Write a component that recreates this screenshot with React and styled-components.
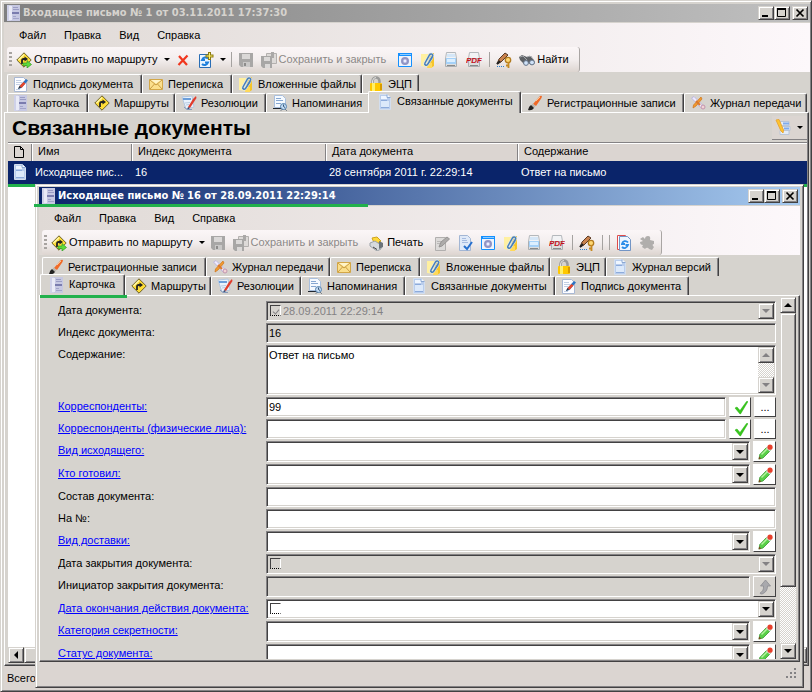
import React from 'react';
import styled, { createGlobalStyle, css } from 'styled-components';

const face = '#d6d3ce';
const green = '#22b14c';

const raised = css`
  border: 1px solid;
  border-color: #d6d3ce #424142 #424142 #d6d3ce;
  box-shadow: inset 1px 1px #fff, inset -1px -1px #848284;
`;

const sunken = css`
  border: 1px solid;
  border-color: #848284 #fff #fff #848284;
  box-shadow: inset 1px 1px #424142, inset -1px -1px #d6d3ce;
`;

const GlobalStyle = createGlobalStyle`
  * { box-sizing: border-box; }
  body { margin: 0; background: ${face}; }
  body, button, input, select, textarea {
    font: 11px/13px "Liberation Sans", Arial, sans-serif;
    color: #000;
  }
`;

/* ---------- icons ---------- */

const Svg = styled.svg`
  flex: none;
  width: 16px;
  height: 16px;
  display: block;
`;

const ClipShape = () => (
  <>
    <path d="M1 2h9v12l-2 1-7-1z" fill="#fff0a0" />
    <path d="M9 1h5v13l-3 2H8z" fill="#f6c52a" />
    <path d="M8 11h4v5H7z" fill="#ffd95a" />
    <path d="M12.500 5 7.500 12.500c-1.200 1.500-3.500.3-2.500-1.500L9.500 3c1.300-2 4-.8 3 1.200L9 10" fill="none" stroke="#dbe8f3" strokeWidth="2.600" />
    <path d="M12.500 5 7.500 12.500c-1.200 1.500-3.500.3-2.500-1.500L9.500 3c1.300-2 4-.8 3 1.200L9 10" fill="none" stroke="#4a7fb5" strokeWidth="1.500" />
  </>
);

const RouteShape = () => (
  <>
    <path d="M8 .8 15.200 8 8 15.200.8 8z" fill="#ffdd35" stroke="#6b5f28" strokeLinejoin="round" />
    <path d="M2.500 8 8 2.500" stroke="#fff6a8" strokeWidth="1.500" />
    <path d="M6 12V8.500Q6 7 7.500 7H9" fill="none" stroke="#222" strokeWidth="1.800" />
    <path d="m8.500 4.500 3.500 2.500-3.500 2.500z" fill="#222" />
  </>
);

const PrinterShape = () => (
  <>
    <path d="M3.500.5h9l1 6h-11z" fill="#f2f3f5" stroke="#b4b8bc" />
    <path d="M2.500 6.500h11v8h-11z" fill="#dcdedf" stroke="#abafb2" />
    <path d="M4 13.500h8" stroke="#8a8a8a" />
  </>
);

const shapes = {
  card: (
    <>
      <path d="M1 0h13v16H1z" fill="#c6c8e2" />
      <path d="M1 0h4v16H1z" fill="#cfd1e8" />
      <path d="M3 1h3v14H3z" fill="#e9eaf6" />
      <path d="M7 2.500h5M7 4.500h6" stroke="#9a9cc4" />
      <path d="M6 8h7" stroke="#7a7cae" strokeWidth="2" />
      <path d="M7 11.500h3M7 13.500h6" stroke="#a2a4ca" />
    </>
  ),
  route: <RouteShape />,
  send: (
    <>
      <RouteShape />
      <path d="M7 11h4V8.500l4.500 4-4.500 3.500v-2.500H7z" fill="#5edb3c" stroke="#2f9c22" strokeWidth=".7" />
    </>
  ),
  remove: <path d="m4 4 8 9M12.500 3.500l-9 9.500" stroke="#f0361e" strokeWidth="2.200" />,
  create: (
    <>
      <path d="M1.500 2.500h11v13h-11z" fill="#eaf5ff" stroke="#2a6db5" />
      <path d="M10 6.500C8 4.500 5 5.500 4 8h3M4 12c2 2 5 1 6-1.500H7" fill="none" stroke="#1f80dd" strokeWidth="2" />
      <path d="M11.500 0v8M7.500 4h8" stroke="#8c7a10" strokeWidth="3" />
      <path d="M11.500 1v6M8.500 4h6" stroke="#fff36b" />
    </>
  ),
  save: (
    <>
      <path d="M1 1h14v14H3l-2-2z" fill="#a8a7a6" />
      <path d="M4 2h8v5H4z" fill="#dad8d7" />
      <path d="M5 10h7v5H5z" fill="#c9c8c7" />
      <path d="M6 11h2v3H6z" fill="#8d8c8b" />
    </>
  ),
  saveClose: (
    <>
      <path d="M5.500 1.500h10v10h-10z" fill="#dddad8" stroke="#b3b0ae" />
      <path d="M0 4h11v12H2l-2-2z" fill="#a8a7a6" />
      <path d="M3 5h6v4H3zM4 12h5v4H4z" fill="#dbd9d8" />
      <path d="M10 0h3v6h-3z" fill="#aaa8a7" />
    </>
  ),
  settings: (
    <>
      <path d="M1.500 1.500h13v13h-13z" fill="#eef4fc" stroke="#1490ff" />
      <path d="M1 2.500h14" stroke="#1490ff" strokeWidth="3" />
      <path d="M3 2.500h11" stroke="#8fcdff" />
      <circle cx="8" cy="9" r="3" fill="#c3c6e6" stroke="#9094c4" strokeWidth="2" />
      <circle cx="8" cy="9" r="1.200" fill="#eef" />
    </>
  ),
  clip: <ClipShape />,
  scanner: (
    <>
      <PrinterShape />
      <path d="M4 2h8v3H4z" fill="#d4e6f7" />
      <path d="M3 6h10v6H3z" fill="#a5d1f8" />
      <path d="M4 7h8v3H4z" fill="#dcefff" />
    </>
  ),
  pdf: (
    <>
      <PrinterShape />
      <text x="0" y="11" fontFamily="Liberation Sans" fontSize="8" fontWeight="bold" fontStyle="italic" fill="#c4121c">PDF</text>
    </>
  ),
  signKey: (
    <>
      <path d="m1 12 2-5 6-6 3 2-7 7z" fill="#c9824e" stroke="#5a3a26" />
      <path d="m1 12 3-3" stroke="#222" strokeWidth="2" />
      <path d="M1 14.500h7" stroke="#2a7fd0" strokeDasharray="1 1" />
      <circle cx="12" cy="8" r="2.700" fill="#ffd873" stroke="#b27b20" strokeWidth="1.300" />
      <path d="M12.500 10v6M12 13.500h-2" stroke="#c78a20" strokeWidth="1.800" />
    </>
  ),
  find: (
    <>
      <path d="m0 5 3-2 5 2 4-1 3 4 1 3-3 2-4-2-4 1-4-4z" fill="#5d6064" />
      <path d="m1 5 3-1 4 4M8 5l3-1 4 4" fill="none" stroke="#a2a5aa" />
      <circle cx="7" cy="11" r="2.400" fill="#cfe2f8" stroke="#657488" />
      <circle cx="13" cy="10.500" r="2.400" fill="#cfe2f8" stroke="#657488" />
    </>
  ),
  sign: (
    <>
      <path d="M1.500 1.500h9l3 3v11h-12z" fill="#fdfdff" stroke="#a9b8d3" />
      <path d="M3 4.500h5M3 6.500h6M3 8.500h4M3 13.500h4" stroke="#c2cfe4" />
      <path d="m5 13 1.500-3L13 3l2 1.500L8.500 12z" fill="#2d74c4" />
      <path d="m6.500 10 4-4 2 1.500-4 4.500z" fill="#e8472b" />
      <path d="m5 13 1.500-3 1.500 1.500z" fill="#333" />
    </>
  ),
  mail: (
    <>
      <path d="M1.500 3.500h13v10h-13z" fill="#fbdf8c" stroke="#d3a747" />
      <path d="m2 4 6 5 6-5M2 13l4.500-5M14 13 9.500 8" fill="none" stroke="#c99c42" />
      <path d="m3 4 5 3.500L13 4z" fill="#fff4ca" />
    </>
  ),
  lock: (
    <>
      <path d="M4.500 8V5Q5 1.500 8 1.500t3.500 3.500v3" fill="none" stroke="#9a9a98" strokeWidth="2.500" />
      <path d="M4.500 7V5Q5 1.500 8 1.500" fill="none" stroke="#e2e2e0" />
      <rect x="2" y="7" width="12" height="8" rx="1" fill="#ffc800" />
      <path d="M4 7h3v8H4z" fill="#fff06a" />
      <path d="M12 8h2v6h-2z" fill="#d89a00" />
    </>
  ),
  resolution: (
    <>
      <path d="m1 2 10-1 2 11-8 2z" fill="#e9f2fc" stroke="#b3c7e0" />
      <path d="M2 3h8v2H2z" fill="#6b9eda" />
      <path d="m4 8 5-.5M5 10l3-.5" stroke="#b8cbe3" />
      <path d="m7 12 5-8 3-3 .5 2L9 13z" fill="#e13d2c" />
      <path d="m6 15 1-3 2 1z" fill="#33476e" />
      <path d="m3 12 3 2.500h5" fill="none" stroke="#8598b8" />
    </>
  ),
  reminder: (
    <>
      <path d="M2.500.5h8l3 3v9h-11z" fill="#f5faff" stroke="#a9bfdd" />
      <path d="M4 3.500h5M4 5.500h7M4 8.500h5" stroke="#86a7d1" />
      <path d="M1 13.500h9" stroke="#20262e" />
      <circle cx="11.500" cy="11.500" r="3" fill="#c2daf2" stroke="#5583b0" />
      <path d="M11.500 9.500v2l1.500 1" stroke="#357" fill="none" />
      <path d="m9 15.500 1-1M14.500 15.500l-1-1" stroke="#234" />
    </>
  ),
  related: (
    <>
      <path d="M2.500.5h8l3 3v12h-11z" fill="#b9cdec" stroke="#d3deee" />
      <path d="M4 2h6v3H4z" fill="#eff6ff" />
      <path d="M4 7h8v6H4z" fill="#dce9fa" />
      <path d="M10 .5v3h3.500" fill="#f5faff" stroke="#8ca8d2" />
      <path d="M4 6.500h6M4 13.500h8" stroke="#8dabdb" />
    </>
  ),
  brush: (
    <>
      <path d="m6 9 7-8q3-1 1.500 2L9 11z" fill="#f06a28" />
      <path d="m9 6 4-4" stroke="#ffc08c" />
      <path d="m5.500 8.500 3 2.500-1.500 2-3-2z" fill="#b9b5ae" />
      <path d="M1 15q1-4 3-5l3 3q-2 3-6 2z" fill="#222" />
    </>
  ),
  journal: (
    <>
      <path d="M1.500 3 4 1.500l9 9-2.500 2z" fill="#eeeaff" stroke="#bdb8dc" />
      <path d="m11 2 1 2-6 7-3 2 .5-3z" fill="#f29a2e" stroke="#cf7417" strokeWidth=".7" />
      <path d="m6 6 4 4" stroke="#d9782b" strokeWidth="2" />
      <circle cx="13" cy="12" r="2" fill="#f3d3d4" stroke="#c094ae" />
    </>
  ),
  print: (
    <>
      <path d="m3 3 5-1 4 4-6 4z" fill="#ffd93b" stroke="#d0a51c" />
      <path d="m1 8 5-2 6 4v4l-4 2-7-5z" fill="#d6dadd" stroke="#9aa1a6" />
      <path d="m10 6 4 2v4l-4 2" fill="#6a7379" />
      <path d="m4 12 4 2.500" stroke="#444" />
    </>
  ),
  edit: (
    <>
      <path d="M1.500 2.500h10v13h-10z" fill="#dcdad9" stroke="#b1afae" />
      <path d="M3 6.500h5M3 8.500h4" stroke="#b9b7b6" />
      <path d="m5 12 2-5 6-5 2.500 2L8 11z" fill="#adabaa" stroke="#979594" />
    </>
  ),
  docCheck: (
    <>
      <path d="M2.500.5h8l3 3v12h-11z" fill="#dfe9f8" stroke="#a3b6d4" />
      <path d="M5 3.500h4M5 5.500h5M5 7.500h6" stroke="#a5bbe0" />
      <path d="m7 11 3 3 5-7" fill="none" stroke="#256fce" strokeWidth="2" />
    </>
  ),
  refresh: (
    <>
      <path d="M1.500.5h8v14h-8z" fill="#fff" stroke="#de4b4b" />
      <path d="M3.500 1.500h8l3 3v11h-11z" fill="#edf6ff" stroke="#7395c5" />
      <path d="M12 7.500C10 5 6.500 6 6 9h3M6 12c2 2 5 1 6-2H9.500" fill="none" stroke="#2a8de8" strokeWidth="1.800" />
    </>
  ),
  puzzle: (
    <path d="M1 4 4 2l2 2q0-3 3-3t2 4l4 1v3q-2 0-1 2l1 1-2 3-3-1q-1-2-3-1l-1 1-3-2 1-2q-3 0-3-3l3-1z" fill="#b0aeac" />
  ),
  page: <path d="M3.500 2.500h6l3 3v8h-9zM9.500 2.500v3h3" fill="none" stroke="#000" />,
  listEdit: (
    <>
      <path d="M5 2.500h9v4H5zM7 7.500h8v4H7zM5 11.500h9v4H5z" fill="#e4ecf7" stroke="#b9c5d6" />
      <path d="M8 4.500h6M9 9.500h5" stroke="#7faaea" strokeWidth="2" />
      <path d="m1 1 3-.5L8.500 11l-.5 3-2-2z" fill="#ffc52e" stroke="#e8a83a" />
    </>
  ),
  check: <path d="m3 9 2-1 3 3.500 6.500-9H16L8.500 15H8z" fill="#36c71b" stroke="#27b10f" strokeWidth=".5" />,
  pencil: (
    <>
      <path d="m2 15 .8-4.500L10 3l3.500 3.500L6 14z" fill="#58cf48" stroke="#3a9832" strokeWidth=".8" />
      <path d="m4.500 10.500 6-6" stroke="#b5f3a0" strokeWidth="1.500" />
      <path d="m9 4 1.800-2 3.700 3.500-1.800 2z" fill="#e4e4e8" />
      <circle cx="13" cy="3.200" r="2.600" fill="#e8402c" />
      <path d="m1.500 15.500.7-3 2 2z" fill="#7a4a1c" />
    </>
  ),
  up: <path d="m8.500 1 5 6h-3q0 6-5.500 8-2 0-2-1 4-2 3.500-7H3.500z" fill="#a9a9ad" stroke="#8b8b90" strokeWidth=".8" />,
};

const Icon = ({ name }) => (
  <Svg viewBox="0 0 16 16" aria-hidden="true">{shapes[name]}</Svg>
);

const Arrow = styled.span`
  flex: none;
  width: 0;
  height: 0;
  border: solid transparent;
  ${({ $dir, $off }) => {
    const c = $off ? '#848284' : '#000';
    if ($dir === 'up') return `border-width: 0 4px 4px; border-bottom-color: ${c};`;
    if ($dir === 'left') return `border-width: 4px 4px 4px 0; border-right-color: ${c};`;
    return `border-width: 4px 4px 0; border-top-color: ${c};`;
  }}
`;

/* ---------- windows ---------- */

const MainWindow = styled.div`
  position: relative;
  min-height: 100vh;
  display: flex;
  flex-direction: column;
  padding: 3px 1px 1px 3px;
  background: ${face};
  ${raised}
`;

const ChildWindow = styled.section`
  position: absolute;
  left: 34px;
  right: 7px;
  top: 183px;
  bottom: 3px;
  display: flex;
  flex-direction: column;
  padding: 2px 3px 1px;
  background: ${face};
  ${raised}
`;

const TitleBar = styled.header`
  position: relative;
  flex: none;
  height: 18px;
  margin-bottom: 1px;
  display: flex;
  align-items: center;
  gap: 1px;
  padding: 0 2px 0 2px;
  font: bold 11px/14px "DejaVu Sans Condensed", "DejaVu Sans", sans-serif;
  color: ${({ $active }) => ($active ? '#fff' : '#d6d3ce')};
  background: ${({ $active }) =>
    $active
      ? 'linear-gradient(90deg, #0a246a, #a6caf0)'
      : 'linear-gradient(90deg, #808080, #c0c0c0)'};
`;

const TitleText = styled.span`
  flex: 1;
  white-space: nowrap;
`;

const Caption = styled.button`
  ${raised}
  width: 16px;
  height: 14px;
  padding: 0;
  margin-left: ${({ $gap }) => ($gap ? '2px' : '0')};
  background: ${face};
`;

const Captions = styled.div`
  display: flex;
`;

const TitleMarker = styled.i`
  position: absolute;
  left: -5px;
  bottom: -2px;
  width: 334px;
  height: 3px;
  background: ${green};
`;

const CaptionSvg = styled.svg`
  display: block;
  width: 14px;
  height: 12px;
`;

const WindowButtons = () => (
  <Captions>
    <Caption aria-label="Свернуть">
      <CaptionSvg viewBox="0 0 14 12"><path d="M3 9h6" stroke="#000" strokeWidth="2" /></CaptionSvg>
    </Caption>
    <Caption aria-label="Развернуть">
      <CaptionSvg viewBox="0 0 14 12"><path d="M2.500 2v7.500h8V2M2 2h9" fill="none" stroke="#000" /><path d="M2 2h9" stroke="#000" strokeWidth="2" /></CaptionSvg>
    </Caption>
    <Caption aria-label="Закрыть" $gap>
      <CaptionSvg viewBox="0 0 14 12"><path d="m3.500 2.500 7 7m0-7-7 7" stroke="#000" strokeWidth="1.700" /></CaptionSvg>
    </Caption>
  </Captions>
);

/* ---------- menu and toolbar ---------- */

const Bars = styled.div`
  flex: none;
  background: linear-gradient(90deg, #dfd9d5, #fdf8fb);
`;

const Menu = styled.nav`
  height: 24px;
  display: flex;
  align-items: center;
  padding-left: 6px;
`;

const MenuItem = styled.button`
  border: 0;
  background: none;
  padding: 0 9px;
`;

const Toolbar = styled.div`
  display: inline-flex;
  align-items: center;
  height: 25px;
  margin-left: 3px;
  padding: 0 2px;
  border-radius: 3px;
  border-right: 1px solid #a9a5a3;
  background: linear-gradient(#fbf6f7, #f3eeee 50%, #ddd5d0);
`;

const Grip = styled.span`
  width: 3px;
  height: 15px;
  margin-right: 1px;
  background: repeating-linear-gradient(#a7a3a0 0 2px, transparent 2px 4px);
`;

const Tool = styled.button`
  display: flex;
  align-items: center;
  gap: 2px;
  height: 22px;
  padding: 0 ${({ $end }) => $end || 4}px 0 3px;
  border: 0;
  background: none;
  white-space: nowrap;
  color: ${({ disabled }) => (disabled ? '#8c8987' : '#000')};
  ${Arrow} {
    margin-left: 4px;
    border-width: 3px 3px 0;
  }
`;

const Separator = styled.span`
  width: 1px;
  height: 15px;
  margin: 0 3px;
  background: #a5a2a0;
`;

const endPad = (t) => {
  if (t.drop) return 2;
  return t.text ? 8 : 4;
};

const ToolStrip = ({ items }) => (
  <Toolbar role="toolbar">
    <Grip />
    {items.map((t, i) =>
      t === '|' ? (
        <Separator key={i} />
      ) : (
        <Tool key={i} disabled={t.off} $end={endPad(t)} aria-label={t.text || t.icon}>
          <Icon name={t.icon} />
          {t.text}
          {t.drop && <Arrow />}
        </Tool>
      )
    )}
  </Toolbar>
);

/* ---------- tabs ---------- */

const Tabs = styled.div`
  flex: none;
  padding: 2px 0 0;
`;

const TabRow = styled.div`
  display: flex;
  height: 19px;
  padding-left: 3px;
`;

const Tab = styled.button`
  position: relative;
  display: flex;
  align-items: center;
  gap: 4px;
  width: ${({ $w }) => $w}px;
  height: 19px;
  padding: 0 0 0 5px;
  white-space: nowrap;
  color: #000;
  background: ${face};
  border: 1px solid #fff;
  border-right-color: #424142;
  border-bottom: 0;
  border-radius: 2px 2px 0 0;
  box-shadow: inset -1px 0 #848284;
  ${({ $on }) =>
    $on &&
    css`
      height: 22px;
      margin: -2px 0 0 -2px;
      padding: 0 0 2px 8px;
      z-index: 1;
    `}
`;

const TabMarker = styled.i`
  position: absolute;
  left: -1px;
  right: -3px;
  bottom: -2px;
  height: 3px;
  background: ${green};
`;

const TabStrip = ({ rows, marked }) => (
  <Tabs role="tablist">
    {rows.map((row, i) => (
      <TabRow key={i}>
        {row.map(([icon, text, w, on]) => (
          <Tab key={text} role="tab" $w={w} $on={on} aria-selected={!!on}>
            <Icon name={icon} />
            {text}
            {on && marked && <TabMarker />}
          </Tab>
        ))}
      </TabRow>
    ))}
  </Tabs>
);

/* ---------- list of related documents ---------- */

const Panel = styled.main`
  flex: 1;
  min-height: 0;
  display: flex;
  flex-direction: column;
  margin-right: 1px;
  padding: 0 1px 2px 3px;
  border: 1px solid #fff;
  border-right-color: #424142;
  border-bottom-color: #424142;
  box-shadow: inset -1px -1px #848284;
`;

const Heading = styled.div`
  display: flex;
  align-items: center;
  justify-content: space-between;
  height: 29px;
  padding-left: 4px;
`;

const H1 = styled.h1`
  margin: 0;
  font-size: 21px;
  line-height: 24px;
`;

const ListTool = styled.div`
  display: flex;
  align-items: center;
  height: 24px;
  background: #dbd5d1;
  border-bottom: 1px solid #848284;
`;

const DocTable = styled.table`
  flex: none;
  width: 100%;
  table-layout: fixed;
  border-collapse: collapse;
  text-align: left;

  th {
    height: 18px;
    padding: 0 0 0 7px;
    font-weight: normal;
    background: #dbd5d1;
    border-top: 1px solid #848284;
    box-shadow: inset 0 1px #fff, inset 1px 0 #848284, inset 2px 0 #fff;
  }
  th:first-child {
    padding-left: 3px;
    box-shadow: inset 0 1px #fff;
  }
  td {
    height: 25px;
    padding: 0 0 0 4px;
    color: #fff;
    background: #0a246a;
    border-bottom: 3px solid ${green};
    white-space: nowrap;
  }
`;

const Col = styled.col`
  width: ${({ $w }) => ($w ? `${$w}px` : 'auto')};
`;

const ListSpace = styled.div`
  flex: 1;
  background: #fff;
`;

const checker = 'repeating-conic-gradient(#fff 0 25%, #d6d3ce 0 50%) 0 0 / 2px 2px';

const HScroll = styled.div`
  flex: none;
  display: flex;
  height: 16px;
  background: ${checker};
`;

const ScrollButton = styled.button`
  ${raised}
  flex: none;
  display: flex;
  align-items: center;
  justify-content: center;
  width: 16px;
  height: 16px;
  padding: 0;
  background: ${face};
`;

const Thumb = styled.div`
  ${raised}
  flex: ${({ $size }) => $size};
  background: ${face};
`;

const StatusBar = styled.footer`
  flex: none;
  display: flex;
  align-items: center;
  height: 24px;
  padding: 0 3px;
  background: #dbd5d1;
  justify-content: ${({ $end }) => ($end ? 'flex-end' : 'flex-start')};
`;

const SizeGrip = styled(Svg)`
  width: 12px;
  height: 12px;
`;

/* ---------- document card ---------- */

const CardPanel = styled.div`
  flex: 1;
  min-height: 0;
  display: flex;
  padding: 1px 3px 2px 18px;
  border: 1px solid #fff;
  border-right-color: #424142;
  border-bottom-color: #424142;
  box-shadow: inset -1px -1px #848284;
`;

const Form = styled.form`
  flex: 1;
  min-width: 0;
  overflow: hidden;
  display: flex;
  flex-direction: column;
  gap: 2px;
  padding-top: 4px;
`;

const Row = styled.div`
  flex: none;
  display: grid;
  grid-template-columns: 208px 1fr;
  height: ${({ $h }) => $h}px;
`;

const FieldLabel = styled.label`
  padding-top: 3px;
  white-space: nowrap;
`;

const LabelLink = styled.a`
  color: #0000ff;
  text-decoration: underline;
`;

const Control = styled.div`
  display: flex;
  gap: 3px;
  min-width: 0;
`;

const Box = styled.div`
  ${sunken}
  flex: 1;
  min-width: 0;
  display: flex;
  align-items: center;
  padding: 1px;
  background: ${({ $off }) => ($off ? face : '#fff')};
`;

const bare = css`
  flex: 1;
  min-width: 0;
  height: 100%;
  margin: 0;
  padding: 0 1px;
  border: 0;
  outline: 0;
  border-radius: 0;
  background: transparent;
  appearance: none;
`;

const TextInput = styled.input`
  ${bare}
  &:disabled { color: #848284; }
`;

const Select = styled.select`
  ${bare}
`;

const TextArea = styled.textarea`
  ${bare}
  resize: none;
  padding-top: 2px;
`;

const Tick = styled.input`
  appearance: none;
  display: grid;
  place-items: center;
  flex: none;
  width: 11px;
  height: 11px;
  margin: 0 1px 1px 2px;
  border: 1px solid;
  border-color: #424142 #fff #fff #424142;
  border-bottom: 1px dotted #000;
  background: ${({ disabled }) => (disabled ? face : '#fff')};
  &:checked::after {
    content: '';
    width: 3px;
    height: 5px;
    border: solid #848284;
    border-width: 0 1px 1px 0;
    transform: rotate(40deg);
  }
`;

const DropMark = styled(ScrollButton).attrs({ as: 'span' })`
  height: 100%;
  pointer-events: none;
`;

const VScroll = styled.div`
  flex: none;
  display: flex;
  flex-direction: column;
  width: 16px;
  height: 100%;
  margin-left: ${({ $gap }) => ($gap ? 4 : 0)}px;
  justify-content: space-between;
  background: ${checker};
`;

const Track = styled.div`
  flex: ${({ $size }) => $size};
`;

const SideButton = styled.button`
  flex: none;
  display: flex;
  align-items: center;
  justify-content: center;
  width: ${({ $wide }) => ($wide ? 23 : 22)}px;
  padding: 0;
  border: 1px solid;
  border-color: #fff #424142 #424142 #fff;
  background: ${({ disabled }) => (disabled ? face : '#fff')};
`;

const fields = [
  { id: 'docDate', label: 'Дата документа:', type: 'date', value: '28.09.2011 22:29:14', off: true, checked: true },
  { id: 'docIndex', label: 'Индекс документа:', type: 'text', value: '16', gray: true },
  { id: 'content', label: 'Содержание:', type: 'area', value: 'Ответ на письмо' },
  { id: 'corr', label: 'Корреспонденты:', type: 'pick', value: '99', link: true },
  { id: 'corrPerson', label: 'Корреспонденты (физические лица):', type: 'pick', value: '', link: true },
  { id: 'outKind', label: 'Вид исходящего:', type: 'select', link: true },
  { id: 'author', label: 'Кто готовил:', type: 'select', link: true },
  { id: 'parts', label: 'Состав документа:', type: 'text', value: '' },
  { id: 'replyTo', label: 'На №:', type: 'text', value: '' },
  { id: 'delivery', label: 'Вид доставки:', type: 'select', link: true },
  { id: 'closeDate', label: 'Дата закрытия документа:', type: 'date', value: '', off: true },
  { id: 'closedBy', label: 'Инициатор закрытия документа:', type: 'up', value: '' },
  { id: 'endDate', label: 'Дата окончания действия документа:', type: 'date', value: '', link: true },
  { id: 'secrecy', label: 'Категория секретности:', type: 'select', link: true },
  { id: 'status', label: 'Статус документа:', type: 'select', link: true },
];

const FieldControl = ({ f }) => {
  if (f.type === 'area') {
    return (
      <Box>
        <TextArea id={f.id} defaultValue={f.value} />
        <VScroll>
          <ScrollButton type="button" aria-label="Вверх"><Arrow $dir="up" $off /></ScrollButton>
          <ScrollButton type="button" aria-label="Вниз"><Arrow $off /></ScrollButton>
        </VScroll>
      </Box>
    );
  }
  if (f.type === 'date') {
    return (
      <Box $off={f.off}>
        <Tick type="checkbox" disabled={f.off} defaultChecked={f.checked} aria-label="Задать дату" />
        <TextInput id={f.id} defaultValue={f.value} disabled={f.off} />
        <DropMark><Arrow $off={f.off} /></DropMark>
      </Box>
    );
  }
  if (f.type === 'select') {
    return (
      <>
        <Box>
          <Select id={f.id}><option></option></Select>
          <DropMark><Arrow /></DropMark>
        </Box>
        <SideButton type="button" $wide aria-label="Изменить"><Icon name="pencil" /></SideButton>
      </>
    );
  }
  if (f.type === 'pick') {
    return (
      <>
        <Box><TextInput id={f.id} defaultValue={f.value} /></Box>
        <SideButton type="button" aria-label="Проверить"><Icon name="check" /></SideButton>
        <SideButton type="button" aria-label="Выбрать">...</SideButton>
      </>
    );
  }
  if (f.type === 'up') {
    return (
      <>
        <Box $off><TextInput id={f.id} disabled /></Box>
        <SideButton type="button" $wide disabled aria-label="Открыть"><Icon name="up" /></SideButton>
      </>
    );
  }
  return (
    <Box $off={f.gray}>
      <TextInput id={f.id} defaultValue={f.value} readOnly={f.gray} />
    </Box>
  );
};

const heights = { area: 50, select: 21, up: 21 };

const mainTools = [
  { icon: 'send', text: 'Отправить по маршруту', drop: true },
  { icon: 'remove' },
  { icon: 'create', drop: true },
  '|',
  { icon: 'save', off: true },
  { icon: 'saveClose', text: 'Сохранить и закрыть', off: true },
  { icon: 'settings' },
  { icon: 'clip' },
  { icon: 'scanner' },
  { icon: 'pdf' },
  '|',
  { icon: 'signKey' },
  { icon: 'find', text: 'Найти' },
];

const childTools = [
  { icon: 'send', text: 'Отправить по маршруту', drop: true },
  { icon: 'save', off: true },
  { icon: 'saveClose', text: 'Сохранить и закрыть', off: true },
  { icon: 'print', text: 'Печать' },
  { icon: 'edit', off: true },
  { icon: 'docCheck' },
  { icon: 'settings' },
  { icon: 'clip' },
  { icon: 'scanner' },
  { icon: 'pdf' },
  '|',
  { icon: 'signKey' },
  '|',
  '|',
  { icon: 'refresh' },
  { icon: 'puzzle', off: true },
];

const mainTabs = [
  [
    ['sign', 'Подпись документа', 135],
    ['mail', 'Переписка', 90],
    ['clip', 'Вложенные файлы', 130],
    ['lock', 'ЭЦП', 57],
  ],
  [
    ['card', 'Карточка', 81],
    ['route', 'Маршруты', 87],
    ['resolution', 'Резолюции', 91],
    ['reminder', 'Напоминания', 104],
    ['related', 'Связанные документы', 153, true],
    ['brush', 'Регистрационные записи', 163],
    ['journal', 'Журнал передачи', 123],
  ],
];

const childTabs = [
  [
    ['brush', 'Регистрационные записи', 164],
    ['journal', 'Журнал передачи', 124],
    ['mail', 'Переписка', 90],
    ['clip', 'Вложенные файлы', 130],
    ['lock', 'ЭЦП', 56],
    ['related', 'Журнал версий', 113],
  ],
  [
    ['card', 'Карточка', 85, true],
    ['route', 'Маршруты', 86],
    ['resolution', 'Резолюции', 90],
    ['reminder', 'Напоминания', 104],
    ['related', 'Связанные документы', 150],
    ['sign', 'Подпись документа', 134],
  ],
];

const menuItems = ['Файл', 'Правка', 'Вид', 'Справка'];

const WindowBars = ({ tools }) => (
  <Bars>
    <Menu>
      {menuItems.map((m) => <MenuItem key={m}>{m}</MenuItem>)}
    </Menu>
    <ToolStrip items={tools} />
  </Bars>
);

const DocumentCard = () => (
  <ChildWindow>
    <TitleBar $active>
      <Icon name="card" />
      <TitleText>Исходящее письмо № 16 от 28.09.2011 22:29:14</TitleText>
      <WindowButtons />
      <TitleMarker />
    </TitleBar>
    <WindowBars tools={childTools} />
    <TabStrip rows={childTabs} marked />
    <CardPanel>
      <Form>
        {fields.map((f) => (
          <Row key={f.id} $h={heights[f.type] || 20}>
            <FieldLabel htmlFor={f.id}>
              {f.link ? <LabelLink href="#">{f.label}</LabelLink> : f.label}
            </FieldLabel>
            <Control>
              <FieldControl f={f} />
            </Control>
          </Row>
        ))}
      </Form>
      <VScroll $gap>
        <ScrollButton type="button" aria-label="Вверх"><Arrow $dir="up" /></ScrollButton>
        <Thumb $size={83} />
        <Track $size={17} />
        <ScrollButton type="button" aria-label="Вниз"><Arrow /></ScrollButton>
      </VScroll>
    </CardPanel>
    <StatusBar $end>
      <SizeGrip viewBox="0 0 12 12">
        <path d="M9 1h2M9 5h2M5 5h2M9 9h2M5 9h2M1 9h2" stroke="#848284" strokeWidth="2" />
      </SizeGrip>
    </StatusBar>
  </ChildWindow>
);

export default function App() {
  return (
    <>
      <GlobalStyle />
      <MainWindow>
        <TitleBar>
          <Icon name="card" />
          <TitleText>Входящее письмо № 1 от 03.11.2011 17:37:30</TitleText>
          <WindowButtons />
        </TitleBar>
        <WindowBars tools={mainTools} />
        <TabStrip rows={mainTabs} />
        <Panel>
          <Heading>
            <H1>Связанные документы</H1>
            <ListTool>
              <Tool aria-label="Вид списка">
                <Icon name="listEdit" />
                <Arrow />
              </Tool>
            </ListTool>
          </Heading>
          <DocTable>
            <colgroup>
              <Col $w={23} />
              <Col $w={100} />
              <Col $w={194} />
              <Col $w={192} />
              <Col />
            </colgroup>
            <thead>
              <tr>
                <th><Icon name="page" /></th>
                <th>Имя</th>
                <th>Индекс документа</th>
                <th>Дата документа</th>
                <th>Содержание</th>
              </tr>
            </thead>
            <tbody>
              <tr>
                <td><Icon name="related" /></td>
                <td>Исходящее пис...</td>
                <td>16</td>
                <td>28 сентября 2011 г. 22:29:14</td>
                <td>Ответ на письмо</td>
              </tr>
            </tbody>
          </DocTable>
          <ListSpace />
          <HScroll>
            <ScrollButton aria-label="Влево"><Arrow $dir="left" /></ScrollButton>
            <Thumb $size={1} />
          </HScroll>
        </Panel>
        <StatusBar>Всего</StatusBar>
        <DocumentCard />
      </MainWindow>
    </>
  );
}
